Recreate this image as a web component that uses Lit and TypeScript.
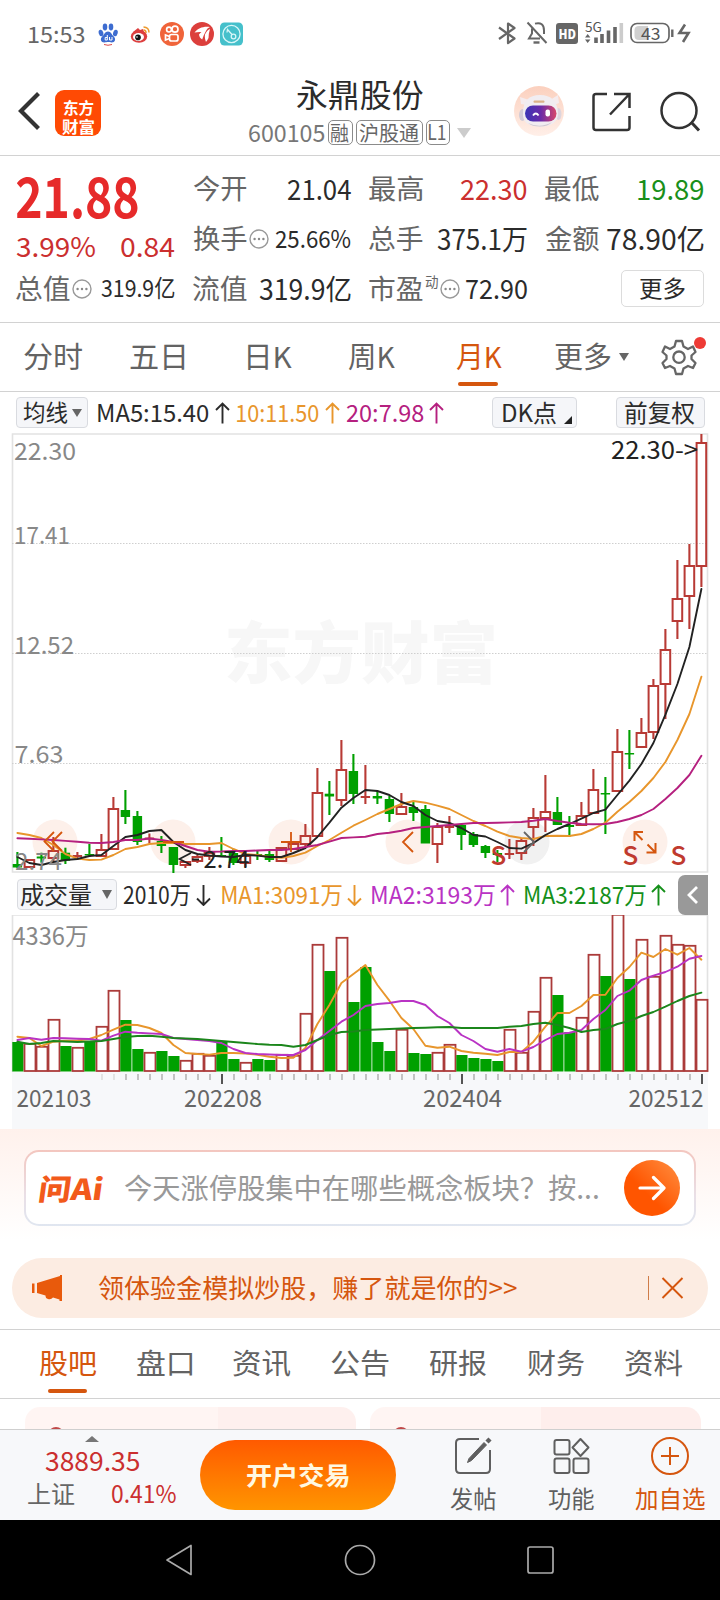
import { LitElement, html, svg, css } from "lit";
import { customElement, property } from "lit/decorators.js";

const FONT = '"Noto Sans CJK SC", "Noto Sans", sans-serif';
const RED = "#b83a35";
const GREEN = "#00a000";
const ORANGE = "#e8962c";
const MAGENTA = "#b5207f";
const PURPLE = "#b933c4";

const measureCtx = document.createElement("canvas").getContext("2d")!;

/** A single line of text whose inked width is set explicitly. */
@customElement("fit-text")
class FitText extends LitElement {
  @property({ type: Number }) w = 0;
  @property({ type: Number }) s = 24;
  @property() weight = "400";
  @property() t = "";
  static styles = css`
    :host { display: block; flex: none; }
    .box { display: block; }
    .ink { display: inline-block; white-space: pre; transform-origin: 0 0; font-family: "Noto Sans CJK SC", "Noto Sans", sans-serif; font-kerning: none; }
  `;
  render() {
    measureCtx.font = `${this.weight} ${this.s}px ${FONT}`;
    measureCtx.fontKerning = "none";
    const m = measureCtx.measureText(this.t);
    const ink = m.actualBoundingBoxLeft + m.actualBoundingBoxRight;
    const k = this.w / ink;
    const dx = m.actualBoundingBoxLeft * k;
    return html`<span class="box" style="width:${this.w}px;height:${this.s}px"><span class="ink"
      style="font-size:${this.s}px;line-height:${this.s}px;font-weight:${this.weight};transform:translate(${dx}px,${-0.03 * this.s}px) scaleX(${k})">${this.t}</span></span>`;
  }
}

const T = (t: string, w: number, s: number, c = "", weight = "400") =>
  html`<fit-text class=${c} .t=${t} .w=${w} .s=${s} .weight=${weight}></fit-text>`;

/* kind (r hollow, g filled), high, low, body top, body bottom */
const candles: [string, number, number, number, number][] = [
  ["g", 852, 868, 864, 867.5], ["r", 859, 868, 859, 868], ["g", 852.7, 862.7, 856.5, 858.5], ["r", 837, 862, 850, 859],
  ["g", 847.7, 864, 852.7, 860.7], ["r", 852, 860, 855, 857], ["g", 844, 857, 854, 855.5], ["r", 834, 857, 849, 857],
  ["r", 797, 850, 808, 850], ["g", 790, 824, 810, 817], ["g", 811, 845, 816, 842], ["r", 833.5, 843.5, 837.5, 839.5],
  ["g", 836, 853, 841, 846], ["g", 847, 873, 847, 865], ["r", 861, 868, 861, 866], ["r", 855, 863, 856, 862],
  ["r", 847, 860, 852, 857], ["g", 837, 857, 855, 856.5], ["g", 849, 865, 853, 863], ["r", 851, 867, 855, 864],
  ["g", 851, 860, 854, 856], ["g", 851, 862, 854, 860], ["r", 847, 862, 847, 862], ["r", 843, 850, 843, 850],
  ["r", 824, 847, 835, 845], ["r", 768, 837, 792, 837], ["g", 781, 815, 793.7, 796.5], ["r", 740, 806, 769, 801],
  ["g", 754, 804, 771, 794], ["r", 765, 804, 796, 798], ["g", 791, 804, 796, 798.5], ["g", 796, 822, 799, 814],
  ["r", 793, 815, 806, 815], ["g", 802, 821, 807, 813], ["g", 805, 843, 809, 843.5], ["r", 823, 863, 826, 845],
  ["r", 816, 833, 826, 828], ["g", 824, 850, 825, 835], ["g", 832, 847, 834, 845], ["g", 845, 858, 846, 853],
  ["g", 850, 862, 853, 855], ["r", 839, 859, 853, 855], ["r", 838, 860, 840, 854], ["r", 808, 846, 817, 828],
  ["r", 775, 832, 811, 819], ["g", 797, 825, 812, 825], ["g", 816, 837, 825, 827], ["r", 802, 826, 815, 826],
  ["r", 769, 814, 789, 814], ["g", 777, 834, 793, 794.5], ["r", 729, 792, 751, 792], ["g", 730, 769, 753, 754.5],
  ["r", 718, 748, 732, 748], ["r", 679, 739, 685, 733], ["r", 629, 719, 649, 685], ["r", 560, 639, 598, 622],
  ["r", 544, 629, 565, 597], ["r", 434, 587, 442, 567],
];
const ma5 = [857, 863, 865, 862, 860, 859, 856, 855, 846, 837, 835, 831, 830, 842, 850, 854, 855.5, 856.5, 857, 855, 855.6, 857, 857, 853, 848, 837, 822.7, 807.7, 798, 790, 791, 795, 802, 806, 815, 821, 823, 828, 835, 836.5, 842, 848, 848.6, 843, 835, 829, 824, 818.6, 813, 809.6, 795, 780.6, 764, 743, 714.6, 684, 647, 589];
const ma10 = [833, 835, 838, 845, 854, 858.6, 860, 859.6, 855, 849, 847, 844, 843, 843, 844, 844, 844, 843, 849, 854, 855, 857, 857.7, 856, 852.7, 846, 840, 832.7, 825.7, 820, 814, 809, 804, 801, 802.7, 805.7, 809, 815, 821, 826, 831.7, 836, 838, 839, 836, 835.7, 836, 834, 829, 822.7, 811.7, 802, 791, 778, 762, 740, 714, 676.7];
const ma20 = [838.3, 838.8, 839.4, 840, 840.9, 841.8, 842.7, 843, 842, 840, 840, 838.5, 840, 842, 846, 850, 851.7, 851.5, 851, 851, 850.5, 850, 850, 849, 847, 845, 841.7, 838, 837.4, 836.7, 834, 832.7, 830.7, 828, 827, 826, 825, 824, 823, 823, 822.7, 822.4, 822, 820.7, 819, 821, 822.7, 824, 824.3, 824, 822, 819, 815, 809, 799, 788, 775, 755.7];

const volumes = "g1042 r1043 r1046 r1019 g1046 r1047 g1041 r1026 r990 g1020 g1049 r1052 g1051 g1056 r1060 r1053 r1055 g1041 g1059 r1062 g1059 g1060 r1054 r1055 r1013 r944 g971 r937 g1002 g967 g1042 g1051 r1029 g1053 g1054 r1052 r1044 g1055 g1058 g1059 g1061 r1029 r1052 r1011 r977 g995 g1032 r1017 r954 g976 r914 g979 r939 r976 r935 r944 r945 r999"
  .split(" ").map((v) => [v[0], +v.slice(1)] as [string, number]);
const vma1 = [1036.7, 1038, 1046, 1041.7, 1040.7, 1040.5, 1039, 1035, 1029.7, 1024.7, 1025, 1028, 1033, 1045, 1053, 1054, 1054.6, 1053, 1053, 1053.5, 1054.7, 1056.7, 1058, 1057.7, 1048, 1024, 1005, 983, 974, 965, 985, 1000.7, 1018, 1029, 1045.7, 1047.7, 1046.7, 1051, 1052.7, 1053.7, 1055, 1052, 1052, 1041.7, 1026.7, 1013, 1013, 1006, 995, 994.7, 978, 967, 952.7, 957, 949, 954.7, 948, 959.7];
const vma2 = [1040, 1038, 1039.7, 1038, 1038.3, 1038.7, 1039, 1040.7, 1035.7, 1031.7, 1032.7, 1033.4, 1034, 1038, 1039, 1040, 1041, 1043, 1049, 1053, 1054, 1054.5, 1055, 1055, 1050, 1040, 1031, 1021.7, 1015, 1006, 1004, 1003, 1001, 1001, 1005, 1016, 1023, 1035, 1041, 1049, 1051.7, 1049, 1051.7, 1047, 1040, 1034, 1032.7, 1030, 1019, 1010, 996, 990.7, 980, 975.7, 972, 966.7, 958.7, 956];
const vma3 = [1041.7, 1044, 1043, 1041, 1041.5, 1042, 1041.5, 1041, 1039, 1037, 1036, 1035.7, 1036.7, 1038, 1038.5, 1039, 1040, 1041, 1042, 1043, 1044, 1044.7, 1045, 1046.7, 1045, 1040, 1035, 1032, 1031.5, 1030, 1029.5, 1029, 1028.5, 1028, 1027.7, 1027.3, 1027, 1028, 1028, 1028, 1028, 1026.7, 1026, 1024, 1022.7, 1025, 1028, 1032, 1030, 1029, 1024, 1021, 1016, 1012, 1006.7, 1001, 996, 992.7];

const cx = (i: number) => 17.4 + 12 * i;
const line = (ys: number[], color: string) =>
  svg`<polyline points=${ys.map((y, i) => `${cx(i)},${y}`).join(" ")} fill="none" stroke=${color} stroke-width="1.9" stroke-linejoin="round" stroke-linecap="round"/>`;

/** Text inside a chart, stretched to a set width. */
const label = (t: string, x: number, y: number, w: number, fill: string, size = 24) =>
  svg`<text x=${x} y=${y} font-size=${size} fill=${fill} textLength=${w} lengthAdjust="spacingAndGlyphs">${t}</text>`;

@customElement("app-root")
class AppRoot extends LitElement {
  static styles = css`
    :host { display: block; width: 720px; height: 1600px; overflow: hidden; background: #fff; color: #2b2b2b; font-family: "Noto Sans CJK SC", "Noto Sans", sans-serif; }
    * { box-sizing: border-box; }
    svg { display: block; flex: none; }
    svg text { font-family: "Noto Sans CJK SC", "Noto Sans", sans-serif; }
    .page { display: flex; flex-direction: column; }
    .page > * { flex: none; }
    .gray { color: #666; }
    .red { color: #cb2f2f; }
    .strong-red { color: #e62a2a; }
    .green { color: #1a8f1a; }
    .orange { color: #d5560e; }

    .status { height: 70px; display: flex; align-items: flex-start; justify-content: space-between; padding: 20px 29px 0 28px; }
    .status-left { display: flex; align-items: center; height: 28px; gap: 10px; }
    .status-right { display: flex; align-items: center; height: 28px; }

    .header { height: 86px; display: flex; align-items: center; border-bottom: 1px solid #d2d2d2; padding: 0 18.5px 0 17px; }
    .header-left { display: flex; align-items: center; gap: 15px; padding-bottom: 4px; width: 224px; }
    .brand { width: 46px; height: 46px; margin-top: 4px; border-radius: 9px; background: #ff4a04; color: #fff; display: flex; flex-direction: column; align-items: center; justify-content: center; gap: 3px; }
    .title { display: flex; flex-direction: column; align-items: center; gap: 9px; width: 237px; }
    .code { display: flex; align-items: center; gap: 3px; color: #777; height: 26px; }
    .code .caret { margin-left: 4px; }
    .tag { height: 25px; border: 1.5px solid #8b8b8b; border-radius: 5px; display: flex; align-items: center; justify-content: center; padding: 0 2.5px; color: #666; }
    .header-right { display: flex; align-items: center; gap: 28.5px; padding-bottom: 1px; margin-left: auto; }
    .header-right svg:first-child { margin-bottom: 2px; }

    .quote { height: 167px; border-bottom: 1px solid #d2d2d2; display: grid; grid-template-columns: 159px 158px 158px 159px; grid-template-rows: 50px 49px 51px; column-gap: 18px; padding: 8px 0 0 16px; }
    .cell { display: flex; align-items: center; justify-content: space-between; }
    .cell.big { padding-top: 13px; }
    .cell.pct { padding-top: 16px; }
    .pair { display: flex; align-items: center; gap: 2px; }
    .sup { height: 42px; }
    .more { width: 83px; height: 37px; border: 1px solid #dcdcdc; border-radius: 5px; display: flex; align-items: center; justify-content: center; margin-left: auto; }

    .tabs { height: 69px; border-bottom: 1px solid #d2d2d2; display: grid; grid-template-columns: 105.5px 118px 100px 108px 99px 105px 60px; padding-left: 24px; align-items: start; }
    .tab { height: 67px; display: flex; align-items: center; color: #636363; position: relative; gap: 8px; }
    .tab.on { color: #d5560e; }
    .tab.on::after { content: ""; position: absolute; left: 2px; top: 59px; width: 40px; height: 4px; border-radius: 2px; background: #d5560e; }

    .ma { height: 41px; display: flex; align-items: center; padding: 0 15.5px 0 16px; color: #2b2b2b; }
    .btn { height: 31px; background: #f5f6f9; border: 1px solid #d9dbe0; border-radius: 4px; display: flex; align-items: center; color: #2b2b2b; }
    .btn.avg { width: 72px; padding-left: 6px; gap: 4px; }
    .btn.dk { width: 85px; margin-left: auto; padding-left: 10px; gap: 8px; }
    .btn.dk svg { margin-top: 15px; }
    .btn.fq { width: 89px; justify-content: center; margin-left: 38.5px; }
    .series { display: flex; align-items: center; gap: 6px; margin-left: 10px; }
    .series + .series { margin-left: 6.5px; }
    .series.c20 { gap: 5px; }
    .c10 { color: #e8962c; }
    .c20 { color: #b5207f; }
    .cp { color: #b933c4; }
    .cg { color: #15901a; }

    .vol-head { height: 41px; display: flex; align-items: center; padding: 0 12px 0 17px; }
    .btn.vol { width: 100px; padding-left: 2px; gap: 11px; }
    .series.v { margin-left: 6px; }
    .series.v2 { margin-left: 10px; gap: 5px; }
    .series.v + .series.v2 { margin-left: 11px; }
    .fold { width: 30px; height: 40px; background: #999; border-radius: 7px 0 0 7px; display: flex; align-items: center; justify-content: center; margin-left: auto; }

    .ask { height: 129px; background: linear-gradient(#fff1ec, #fff 86%); padding: 21px 24px 0; }
    .ask-box { height: 76px; border-radius: 15px; padding: 2px; background: linear-gradient(#f3c6bf, #e9dfe6 60%, #e0e6f0); }
    .ask-in { height: 72px; border-radius: 13px; background: #fff; display: flex; align-items: center; padding: 0 14px; }
    .ask-logo { display: flex; color: #f25a1b; width: 64px; transform: skewX(-8deg); }
    .ask-text { margin-left: 20px; color: #999; }
    .go { width: 56px; height: 56px; border-radius: 50%; background: linear-gradient(45deg, #ff5500 40%, #ff9043); display: flex; align-items: center; justify-content: center; margin-left: auto; }

    .notice { height: 60px; margin: 0 12px; border-radius: 30px; background: #fcece2; display: flex; align-items: center; padding: 0 24px 0 19px; color: #d5560e; }
    .notice-text { margin-left: 35px; }
    .close { display: flex; align-items: center; gap: 12px; margin-left: auto; }
    .bar { width: 1.5px; height: 24px; background: #cf7c48; }

    .tabs2 { height: 70px; margin-top: 11px; border-top: 1px solid #d2d2d2; border-bottom: 1px solid #d2d2d2; display: flex; justify-content: space-between; padding: 0 37px 0 39px; }
    .tabs2 .tab.on::after { left: 9px; top: 59px; width: 39px; }

    .cards { height: 30px; overflow: hidden; display: flex; gap: 14px; padding: 8px 18px 0 25px; }
    .card { width: 331px; height: 60px; border-radius: 15px; background: linear-gradient(90deg, #fff5f3 0 193px, #fef0ee 193px); padding: 20px 0 0 23px; }
    .card.b { background: linear-gradient(90deg, #fff5f3 0 171px, #feeeec 171px); }
    .dot { width: 16px; height: 16px; border-radius: 50%; background: #c04848; }

    .bottom { height: 91px; border-top: 1px solid #cfcfcf; background: #f7f8fa; display: flex; }
    .index { width: 200px; padding: 6px 0 0 28px; }
    .index svg { margin-left: 57px; }
    .index .val { padding: 6px 0 0 17px; }
    .index .row { display: flex; align-items: center; gap: 37px; padding-top: 8px; }
    .trade { width: 196px; height: 70px; margin-top: 10px; border-radius: 35px; background: linear-gradient(#ff5a00, #ff9500); color: #fff9e2; display: flex; align-items: center; justify-content: center; }
    .actions { display: grid; grid-template-columns: 98px 97px 101px; margin-left: 28px; }
    .act { display: flex; flex-direction: column; align-items: center; color: #5f5f5f; padding-top: 6px; gap: 12px; }
    .act.orange { color: #d5560e; }

    .nav { height: 80px; background: #000; display: flex; align-items: center; justify-content: space-around; padding: 0 90px; }
  `;

  private dots() {
    return html`<svg width="20" height="20" viewBox="0 0 20 20"><circle cx="10" cy="10" r="9" fill="none" stroke="#999" stroke-width="1.4"/><g fill="#888"><circle cx="5.6" cy="10" r="1.2"/><circle cx="10" cy="10" r="1.2"/><circle cx="14.4" cy="10" r="1.2"/></g></svg>`;
  }
  private tri(w: number, h: number, c: string) {
    return html`<svg class="caret" width=${w} height=${h} viewBox="0 0 10 10" preserveAspectRatio="none"><path d="M0 0H10L5 10Z" fill=${c}/></svg>`;
  }
  private arrow(up: boolean) {
    return html`<svg width="15" height="22" viewBox="0 0 15 22" fill="none" stroke="currentColor" stroke-width="1.9"><path d=${up ? "M7.5 21.5V1.500M1 8L7.5 1.500L14 8" : "M7.5 1V21M1 14.500L7.5 21L14 14.500"}/></svg>`;
  }

  private statusBar() {
    return html`<div class="status">
      <div class="status-left">
        ${T("15:53", 57, 22.5, "gray")}
        <svg width="150" height="26" viewBox="0 0 150 26">
          <g fill="#3d6cd0"><ellipse cx="6" cy="12" rx="2.3" ry="3.3" transform="rotate(-15 6 12)"/><ellipse cx="10" cy="6" rx="2.3" ry="3.4"/><ellipse cx="16" cy="6" rx="2.3" ry="3.4"/><ellipse cx="20.4" cy="12" rx="2.3" ry="3.3" transform="rotate(15 20.4 12)"/><path d="M13 10.5c3 0 3.600 3 5.800 5 2.500 2.500 1.200 6-2 6-1.500 0-2.500-.4-3.800-.4s-2.300.4-3.800.4c-3.200 0-4.500-3.500-2-6 2.200-2 2.800-5 5.800-5Z"/></g>
          <path d="M9 23.500Q13 25 17 23.500" stroke="#d94a4a" fill="none"/>
          <path d="M12.300 14v5H10.200v-2.500h2M14.500 16v3h2.500V16" stroke="#fff" fill="none" stroke-width="1"/>
          <g transform="translate(32 0)"><ellipse cx="12" cy="15.500" rx="8.200" ry="6.200" fill="#dd3e3e"/><path d="M6 11l5-4 2 2 3-1 1 3Z" fill="#dd3e3e"/><ellipse cx="11.500" cy="16" rx="5.500" ry="4" fill="#fff"/><circle cx="11" cy="16.400" r="2.800" fill="#111"/><circle cx="10" cy="16" r=".8" fill="#fff"/><path d="M16.500 9q2.500 0 2.500 3M16.500 6q5.500 .3 5.500 5.500" fill="none" stroke="#ee9a2e" stroke-width="1.500"/></g>
          <g transform="translate(65 1)"><circle cx="12" cy="12" r="12" fill="#f0643a"/><g fill="none" stroke="#fff" stroke-width="1.700"><circle cx="9" cy="7.600" r="2.400"/><circle cx="15" cy="7.200" r="3"/><rect x="9.500" y="12.500" width="8.500" height="6.500" rx="2"/><path d="M9.500 14.500L5.500 13v5L9.500 16.500"/></g></g>
          <g transform="translate(95 1)"><circle cx="12" cy="12" r="12" fill="#dc3f3c"/><path d="M4.500 10.500C8 6 14 3.800 20 5c-2.500 1-4.500 3-6 4.500-2.500.5-6 .5-9.500 1Z M9 12.500c2-3 6-5 9-6.500-2 2.500-4 6-5.800 11.500-1.800-1-3-2.800-3.200-5Z M15 12.500c1-2.500 3-5 5-5.500-1 3-1.500 6-1.500 9-.8 2-2 3-2.500 4-.8-2-1.500-5-1-7.500Z" fill="#fff"/></g>
          <g transform="translate(125 1)"><rect x="0" y=".5" width="23" height="23" rx="4.500" fill="#45c0cb"/><g fill="none" stroke="#d8f6f8" stroke-width="1.300"><circle cx="11.500" cy="12" r="8.600"/><circle cx="13.500" cy="14.500" r="2.300"/><path d="M12 12.500L7.500 7.500L7 10.500"/></g></g>
        </svg>
      </div>
      <div class="status-right">
        <svg width="230" height="28" viewBox="461 20 230 28" fill="none" stroke="#666" stroke-width="2.200">
          <path d="M499 27.500L514.500 38.500L508 43V23.500L514.500 28L499 39" stroke-linejoin="round"/>
          <path d="M535 23.600Q544 21.500 544 30.500V34M532 28.500V33.500L529 38.500H540M527.500 22.500L546.500 43" stroke-width="2"/><path d="M533.500 42.500h6" stroke-width="2.400"/>
          <rect x="556" y="23" width="22" height="21" rx="3" fill="#666" stroke="none"/>
          <text x="558.500" y="38.500" font-size="13" font-weight="800" fill="#fff" stroke="none" textLength="17.500" lengthAdjust="spacingAndGlyphs">HD</text>
          <text x="585" y="31.500" font-size="13" fill="#555" stroke="none" textLength="17" lengthAdjust="spacingAndGlyphs">5G</text>
          <path d="M585 37.500l2.700-3.500 2.700 3.500ZM585 39.500l2.700 3.500 2.700-3.500Z" fill="#666" stroke="none"/>
          <path d="M596 43v-5.500M602 43v-9M608.500 43V30.500M615 43V27" stroke-width="3.600"/><path d="M621.300 43V23" stroke="#ccc" stroke-width="3.600"/>
          <rect x="631" y="23.500" width="38" height="19" rx="6" stroke-width="1.700"/><path d="M641 26h-2q-4.500 0-4.500 4v6q0 4 4.500 4h9V26Z" fill="#d0d0d0" stroke="none"/>
          <text x="641" y="39.500" font-size="17" fill="#555" stroke="none" textLength="19.500" lengthAdjust="spacingAndGlyphs">43</text>
          <path d="M672.300 29.500v7.500" stroke-width="2.400"/><path d="M685 24.500L679.500 33H688.500L683 42" stroke-width="2.600"/>
        </svg>
      </div>
    </div>`;
  }

  private header() {
    return html`<div class="header">
      <div class="header-left">
        <svg width="23" height="38" viewBox="0 0 23 38"><path d="M21.500 1.500L4 19L21.500 36.500" fill="none" stroke="#333" stroke-width="4.200"/></svg>
        <div class="brand">${T("东方", 31, 16, "", "700")}${T("财富", 32, 16, "", "700")}</div>
      </div>
      <div class="title">
        ${T("永鼎股份", 126, 31.5)}
        <div class="code">${T("600105", 76, 24)}<span class="tag">${T("融", 18, 20)}</span><span class="tag">${T("沪股通", 60, 20)}</span><span class="tag">${T("L1", 17, 21)}</span>${this.tri(14, 10, "#ccc")}</div>
      </div>
      <div class="header-right">
        <svg width="50" height="50" viewBox="0 0 50 50">
          <defs><linearGradient id="rb" x1="0" y1="0" x2="0" y2="1"><stop offset="0" stop-color="#fbd0be"/><stop offset="1" stop-color="#ffefe8"/></linearGradient><linearGradient id="rv"><stop offset="0" stop-color="#3a35b5"/><stop offset=".5" stop-color="#6a2aa8"/><stop offset="1" stop-color="#d8486a"/></linearGradient></defs>
          <circle cx="25" cy="25" r="25" fill="url(#rb)"/><path d="M6 11l1 7 6 1 2-5ZM44 9l1 8-5 2-4-5Z" fill="#f5ecee"/><ellipse cx="8.500" cy="29" rx="3.500" ry="6" fill="#d3cbd6"/><ellipse cx="44.500" cy="28" rx="3" ry="6" fill="#ddd5dd"/>
          <path d="M9 27Q9 9 26 9T44 27Q44 40.500 26 40.500T9 27Z" fill="#f1edf1"/><path d="M14 37Q26 43 38 36Q34 40.500 26 40.500T14 37Z" fill="#cfc8d0"/><rect x="19.500" y="14.500" width="11" height="2.200" rx="1" fill="#dbb289"/>
          <rect x="11" y="19.500" width="31.500" height="16" rx="8" fill="url(#rv)"/><path d="M19 29.500q2.800-4 5.600 0" stroke="#fff" stroke-width="1.800" fill="none"/><rect x="31.500" y="23.500" width="4.500" height="7" rx="2" fill="#fff"/>
        </svg>
        <svg width="39" height="40" viewBox="0 0 39 40" fill="none" stroke="#333" stroke-width="2.500"><path d="M15 2H4Q1.500 2 1.500 4.500V35.500Q1.500 38 4 38H35Q37.500 38 37.500 35.500V24M22 2H37.500V16M37.500 2L18 22.500"/></svg>
        <svg width="42" height="42" viewBox="0 0 42 42" fill="none" stroke="#333" stroke-width="2.500"><circle cx="19" cy="19.500" r="17.500"/><path d="M31 31L39 39.500" stroke-width="3"/></svg>
      </div>
    </div>`;
  }

  private quote() {
    const g = "gray";
    return html`<div class="quote">
      <div class="cell big">${T("21.88", 122, 56, "strong-red", "700")}</div>
      <div class="cell">${T("今开", 54, 27.5, g)}${T("21.04", 63, 28)}</div>
      <div class="cell">${T("最高", 54, 27.5, g)}${T("22.30", 66, 28, "red")}</div>
      <div class="cell">${T("最低", 54, 27.5, g)}${T("19.89", 66, 28, "green")}</div>
      <div class="cell pct">${T("3.99%", 79, 27, "red")}${T("0.84", 54, 27, "red")}</div>
      <div class="cell"><span class="pair">${T("换手", 54, 27.5, g)}${this.dots()}</span>${T("25.66%", 76, 24)}</div>
      <div class="cell">${T("总手", 54, 27.5, g)}${T("375.1万", 90, 28)}</div>
      <div class="cell">${T("金额", 54, 27.5, g)}${T("78.90亿", 97, 28)}</div>
      <div class="cell"><span class="pair">${T("总值", 54, 27.5, g)}${this.dots()}</span>${T("319.9亿", 74, 23.5)}</div>
      <div class="cell">${T("流值", 54, 27.5, g)}${T("319.9亿", 92, 28)}</div>
      <div class="cell"><span class="pair">${T("市盈", 54, 27.5, g)}<span class="sup">${T("动", 13, 13.5, g)}</span>${this.dots()}</span>${T("72.90", 61, 27)}</div>
      <div class="cell"><span class="more">${T("更多", 45, 23)}</span></div>
    </div>`;
  }

  private tabs() {
    return html`<div class="tabs">
      <div class="tab">${T("分时", 58, 29)}</div><div class="tab">${T("五日", 55, 29)}</div><div class="tab">${T("日K", 44, 29)}</div>
      <div class="tab">${T("周K", 47, 29)}</div><div class="tab on">${T("月K", 46, 29)}</div><div class="tab">${T("更多", 56, 29)}${this.tri(10, 8, "#666")}</div>
      <div class="tab"><svg width="50" height="46" viewBox="660 334 50 46"><path d="M674.500 346.500L676 341H682L683.500 346.500L688 349L693 346.500L695.500 352L691.500 355.500V359L695.500 363L693 368L688 366L683.500 368.500L682 374H676L674.500 368.500L670 366L665 368L662.500 363L666.500 359V355.500L662.500 352L665 346.500L670 349Z" fill="none" stroke="#666" stroke-width="2.300" stroke-linejoin="round"/><circle cx="679" cy="357.200" r="5.700" fill="none" stroke="#666" stroke-width="2.300"/><circle cx="700" cy="343" r="6" fill="#ee3a35"/></svg></div>
    </div>`;
  }

  private maRow() {
    return html`<div class="ma">
      <div class="btn avg">${T("均线", 45, 23)}${this.tri(10, 8, "#666")}</div>
      <div class="series">${T("MA5:15.40", 111, 24)}${this.arrow(true)}</div>
      <div class="series c10">${T("10:11.50", 82, 24)}${this.arrow(true)}</div>
      <div class="series c20">${T("20:7.98", 78, 24)}${this.arrow(true)}</div>
      <div class="btn dk">${T("DK点", 53, 24)}<svg width="8" height="8" viewBox="0 0 8 8"><path d="M8 0V8H0Z" fill="#222"/></svg></div>
      <div class="btn fq">${T("前复权", 70, 24)}</div>
    </div>`;
  }

  private candleChart() {
    return html`<svg width="720" height="441" viewBox="0 433 720 441">
      <text x="224" y="678" font-size="67" font-weight="900" fill="#f7f7f7" textLength="274" lengthAdjust="spacingAndGlyphs">东方财富</text>
      <path d="M12.500 434H707.500V872H12.500Z" fill="none" stroke="#e2e2e2" stroke-width="1.600"/>
      <path d="M12 543.500H708M12 653.500H708M12 763.500H708" stroke="#cfcfcf" stroke-width="1" stroke-dasharray="1.500 1.500"/>
      ${label("22.30", 14, 459.5, 62, "#888")}${label("17.41", 14, 543.5, 56, "#888")}${label("12.52", 14, 653.5, 60, "#888")}${label("7.63", 14.5, 763, 49, "#888")}
      ${[55, 173, 291, 408, 645].map((x) => svg`<circle cx=${x} cy="842" r="22.500" fill="#fdf0ea"/>`)}<circle cx="527" cy="842" r="22.500" fill="#f1f1f1"/>
      ${candles.map(([k, hi, lo, t, b], i) => {
        const x = cx(i);
        if (k === "g") return svg`<path d=${`M${x} ${hi}V${lo}`} stroke=${GREEN} stroke-width="2.1"/><rect x=${x - 4.7} y=${t} width="9.400" height=${b - t} fill=${GREEN}/>`;
        if (b - t < 4) return svg`<path d=${`M${x} ${hi}V${lo}`} stroke=${RED} stroke-width="2.1"/><rect x=${x - 4.7} y=${t} width="9.400" height=${b - t} fill=${RED}/>`;
        return svg`<path d=${`M${x} ${hi}V${t}M${x} ${b}V${lo}`} stroke=${RED} stroke-width="2.1"/><rect x=${x - 4.8} y=${t + 1} width="9.600" height=${b - t - 2} fill="none" stroke=${RED} stroke-width="2"/>`;
      })}
      ${line(ma10, ORANGE)}${line(ma5, "#222")}${line(ma20, MAGENTA)}
      ${label("2.74", 15, 869.5, 47, "#888888")}
      <g fill="none" stroke="#d5560e" stroke-width="1.800"><path d="M54 832L44.500 841.500L54 851M62 832L52.500 841.500L62 851M163 842H184M281 842H301M291 832V852M413 832L403 842L413 852"/>
      <path d="M634.500 841V832H643M635 832.500L642.500 840M655.500 843V852.500H646.500M655 852L647.500 844.500" stroke-width="2"/></g>
      <path d="M524 832L534 842L524 852" fill="none" stroke="#666" stroke-width="1.800"/>
      <g fill="none" stroke="#222" stroke-width="1.800"><path d="M191 853L179.500 859L191 865M192 859.500H199"/></g>
      ${label("2.74", 203.5, 868, 46, "#222")}
      ${[498.5, 630.5, 678.5].map((x) => svg`<text x=${x} y="865" font-size="26" font-weight="500" fill="#c03a2e" text-anchor="middle">S</text>`)}
      ${label("22.30->", 611, 458.5, 87, "#222", 24.5)}
    </svg>`;
  }

  private volHead() {
    return html`<div class="vol-head">
      <div class="btn vol">${T("成交量", 71, 24)}${this.tri(10, 9, "#666")}</div>
      <div class="series v">${T("2010万", 67, 24)}${this.arrow(false)}</div>
      <div class="series v2 c10">${T("MA1:3091万", 120, 24)}${this.arrow(false)}</div>
      <div class="series v2 cp">${T("MA2:3193万", 123, 24)}${this.arrow(true)}</div>
      <div class="series v2 cg">${T("MA3:2187万", 121, 24)}${this.arrow(true)}</div>
      <div class="fold"><svg width="12" height="20" viewBox="0 0 12 20"><path d="M10 2L2 10L10 18" fill="none" stroke="#fff" stroke-width="2.800"/></svg></div>
    </div>`;
  }

  private volChart() {
    return html`<svg width="720" height="214" viewBox="0 915 720 214">
      <path d="M12.500 1072V915H707.500V1072" fill="none" stroke="#e2e2e2" stroke-width="1.600"/>
      <rect x="12" y="1072" width="696" height="58" fill="#f7f8fa"/>
      ${label("4336万", 12.5, 944.5, 76, "#888", 24)}
      ${volumes.map(([k, y], i) => {
        const x = 12 + 12 * i;
        return k === "g"
          ? svg`<rect x=${x + 0.3} y=${y} width="11.200" height=${1071.5 - y} fill=${GREEN}/>`
          : svg`<rect x=${x + 0.5} y=${y + 0.8} width="11" height=${1070.2 - y} fill="#fff" stroke="#ab3b3a" stroke-width="1.800"/>`;
      })}
      ${line(vma1, ORANGE)}${line(vma2, PURPLE)}${line(vma3, "#1b861b")}
      ${Array.from({ length: 51 }, (_, j) => {
        const i = j + 7;
        const major = i === 17 || i === 37 || i === 57;
        return svg`<path d=${`M${18 + 12 * i} 1074V${major ? 1084 : 1080}`} stroke=${major ? "#555" : i < 9 ? "#ddd" : "#b5b5b5"} stroke-width=${major ? 2 : 1.6}/>`;
      })}
      ${label("202103", 16.5, 1106.5, 75, "#666", 24)}${label("202208", 184, 1106.5, 78, "#666", 24)}${label("202404", 423, 1106.5, 79, "#666", 24)}${label("202512", 628.5, 1106.5, 75, "#666", 24)}
    </svg>`;
  }

  render() {
    return html`<div class="page">
      ${this.statusBar()}${this.header()}${this.quote()}${this.tabs()}${this.maRow()}${this.candleChart()}${this.volHead()}${this.volChart()}
      <div class="ask"><div class="ask-box"><div class="ask-in">
        <div class="ask-logo">${T("问Ai", 62, 29, "", "900")}</div>
        ${T("今天涨停股集中在哪些概念板块？按...", 474, 28, "ask-text")}
        <div class="go"><svg width="28" height="30" viewBox="0 0 28 30" fill="none" stroke="#fff" stroke-width="3.200" stroke-linecap="round" stroke-linejoin="round"><path d="M2 15H25.500M15.500 4.500L26 15L15.500 25.500"/></svg></div>
      </div></div></div>
      <div class="notice">
        <svg width="32" height="28" viewBox="0 0 32 28"><path d="M1 9.500H3.500V19H1ZM6 9L29 2V1H31V27H28.500V25.500L22 23.500Q20 26 17 25Q14.500 24.500 14.500 21.500L6 19Z" fill="#e85a0c"/></svg>
        ${T("领体验金模拟炒股，赚了就是你的>>", 419, 26, "notice-text")}
        <div class="close"><span class="bar"></span><svg width="23" height="22" viewBox="0 0 23 22"><path d="M1.500 1L21.500 21M21.500 1L1.500 21" stroke="#d5560e" stroke-width="1.900"/></svg></div>
      </div>
      <div class="tabs2">
        ${["股吧", "盘口", "资讯", "公告", "研报", "财务", "资料"].map((t, i) => html`<div class=${i ? "tab" : "tab on"}>${T(t, t === "盘口" ? 55 : 57.5, 28.5)}</div>`)}
      </div>
      <div class="cards"><div class="card"><div class="dot"></div></div><div class="card b"><div class="dot"></div></div></div>
      <div class="bottom">
        <div class="index">
          <svg width="14" height="6" viewBox="0 0 14 6"><path d="M0 6L7 0L14 6Z" fill="#777"/></svg>
          <div class="val">${T("3889.35", 95, 26, "red")}</div>
          <div class="row">${T("上证", 47, 24, "gray")}${T("0.41%", 64, 24.5, "red")}</div>
        </div>
        <div class="trade">${T("开户交易", 102, 25.5, "", "700")}</div>
        <div class="actions">
          <div class="act"><svg width="40" height="40" viewBox="0 0 40 40" fill="none" stroke="#5f5f5f" stroke-width="2"><path d="M26 3H7Q3 3 3 7V33Q3 37 7 37H33Q37 37 37 33V14"/><path d="M14.500 26.500L16 22.500L31 6.500L33.500 9L18.500 24.500Z" fill="#5f5f5f" stroke-width="1"/><path d="M34 6L37 3" stroke-width="4.500"/></svg>${T("发帖", 46, 23.5)}</div>
          <div class="act"><svg width="40" height="40" viewBox="0 0 40 40" fill="none" stroke="#5f5f5f" stroke-width="2"><rect x="3.500" y="4" width="15" height="14.500" rx="2"/><rect x="3.500" y="22.500" width="15" height="14.500" rx="2"/><rect x="22.500" y="22.500" width="15" height="14.500" rx="2"/><path d="M29.500 3L37.500 11.500L29.500 20L21.500 11.500Z" stroke-linejoin="round"/></svg>${T("功能", 46, 23.5)}</div>
          <div class="act orange"><svg width="40" height="40" viewBox="0 0 40 40" fill="none" stroke="#d5560e" stroke-width="2"><circle cx="20" cy="20" r="18"/><path d="M20 11V29M11 20H29"/></svg>${T("加自选", 70, 23.5)}</div>
        </div>
      </div>
      <div class="nav">
        <svg width="28" height="32" viewBox="0 0 28 32" fill="none" stroke="#aaa" stroke-width="1.700" stroke-linejoin="round"><path d="M26 1.500V30.500L2 16Z"/></svg>
        <svg width="32" height="32" viewBox="0 0 32 32" fill="none" stroke="#aaa" stroke-width="1.700"><circle cx="16" cy="16" r="14.500"/></svg>
        <svg width="28" height="28" viewBox="0 0 28 28" fill="none" stroke="#aaa" stroke-width="1.700"><rect x="1" y="1" width="25" height="26" rx="2"/></svg>
      </div>
    </div>`;
  }
}
